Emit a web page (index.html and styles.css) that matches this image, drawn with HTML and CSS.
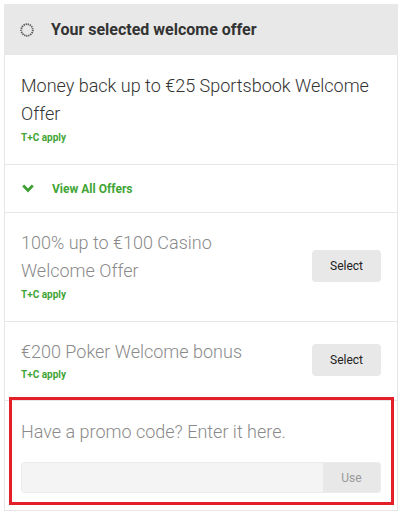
FILE: index.html
```html
<!DOCTYPE html>
<html>
<head>
<meta charset="utf-8">
<link rel="stylesheet" href="styles.css">
</head>
<body>
<div class="panel">
  <div class="header">
    <svg class="spinner" width="14" height="14" viewBox="0 0 14 14"><circle cx="7" cy="7" r="5.8" fill="none" stroke="#555" stroke-width="1.8" stroke-dasharray="1.3 0.8"/></svg>
    <span class="header-title">Your selected welcome offer</span>
  </div>
  <div class="row selected">
    <div class="offer-text">
      <div class="offer-title dark">Money back up to €25 Sportsbook Welcome Offer</div>
      <div class="tc">T+C apply</div>
    </div>
  </div>
  <div class="row view-all">
    <svg class="chevron" width="12" height="9" viewBox="0 0 12 9"><path d="M1.2 1.6 L6 6.4 L10.8 1.6" fill="none" stroke="#3d9f36" stroke-width="2.8"/></svg>
    <span class="view-all-text">View All Offers</span>
  </div>
  <div class="row offer">
    <div class="offer-text">
      <div class="offer-title">100% up to €100 Casino<br>Welcome Offer</div>
      <div class="tc">T+C apply</div>
    </div>
    <button class="select-btn">Select</button>
  </div>
  <div class="row offer short">
    <div class="offer-text">
      <div class="offer-title">€200 Poker Welcome bonus</div>
      <div class="tc">T+C apply</div>
    </div>
    <button class="select-btn">Select</button>
  </div>
  <div class="row promo">
    <div class="offer-title">Have a promo code? Enter it here.</div>
    <div class="promo-field">
      <div class="promo-input"></div>
      <div class="use-btn">Use</div>
    </div>
    <div class="highlight"></div>
  </div>
</div>
</body>
</html>
```

FILE: styles.css
```css
* { box-sizing: border-box; }
body {
  margin: 0;
  background: #fff;
  font-family: Roboto, "Liberation Sans", sans-serif;
}
.panel {
  margin: 4px 5px 0 4px;
  border: 1px solid #e6e6e6;
  border-top: none;
}
.header {
  height: 51px;
  background: #e8e8e8;
  display: flex;
  align-items: center;
  padding-left: 16px;
  margin: 0 -1px;
}
.spinner { flex: none; }
.header-title {
  margin-left: 17px;
  font-weight: 700;
  font-size: 16px;
  color: #333;
}
.row {
  border-top: 1px solid #e6e6e6;
  padding: 16px 16px 19px 16px;
  display: flex;
  align-items: center;
}
.row:nth-child(2) { border-top: none; }
.selected { padding-top: 17px; padding-bottom: 19px; }
.offer-text { flex: 1; }
.offer-title {
  font-size: 18px;
  font-weight: 300;
  line-height: 28px;
  color: #8a8a8a;
}
.offer-title.dark { color: #333; }
.tc {
  margin-top: 3px;
  font-size: 10px;
  font-weight: 700;
  line-height: 14px;
  color: #3fa535;
}
.short { padding-bottom: 18px; }
.short .tc { margin-top: 2px; }
.view-all {
  height: 48px;
  padding: 0 0 0 17px;
}
.chevron { flex: none; }
.view-all-text {
  margin-left: 18px;
  font-size: 12px;
  font-weight: 700;
  color: #3fa535;
}
.select-btn {
  flex: none;
  width: 69px;
  height: 32px;
  border: none;
  border-radius: 4px;
  background: #e8e8e8;
  font-family: Roboto, "Liberation Sans", sans-serif;
  font-size: 12px;
  color: #222;
  padding: 0;
}
.promo {
  position: relative;
  display: block;
  padding: 17px 16px 17px 16px;
}
.promo-field {
  margin-top: 16px;
  display: flex;
  height: 31px;
  border: 1px solid #ececec;
  border-radius: 3px;
  overflow: hidden;
}
.promo-input {
  flex: 1;
  background: #f4f4f4;
}
.use-btn {
  width: 57px;
  background: #e8e8e8;
  color: #999;
  font-size: 12px;
  display: flex;
  align-items: center;
  justify-content: center;
}
.highlight {
  position: absolute;
  left: 4px;
  right: 3px;
  top: -4px;
  bottom: 5px;
  border: 3px solid #e3202a;
  pointer-events: none;
}
```
